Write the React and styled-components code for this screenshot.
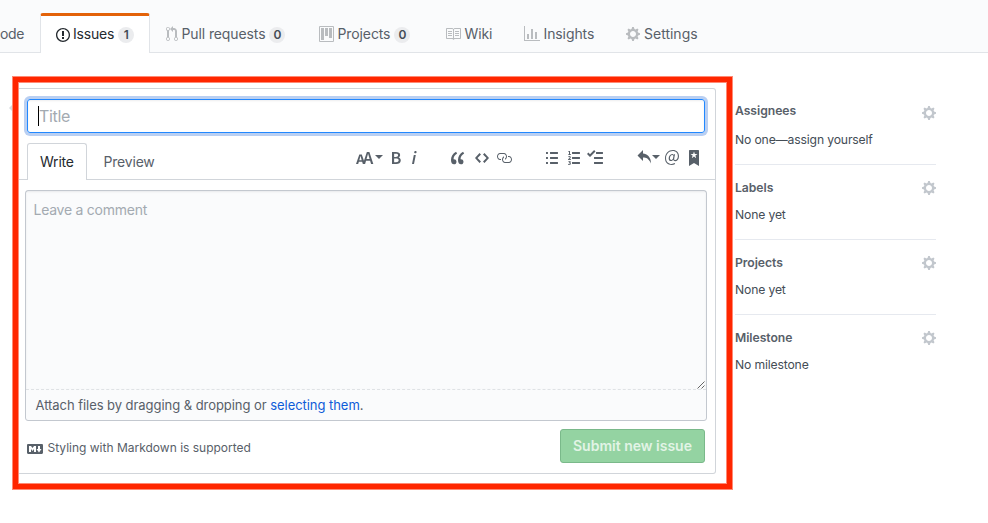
import React from "react";
import styled, { createGlobalStyle } from "styled-components";

const GlobalStyle = createGlobalStyle`
  * { box-sizing: border-box; }
  body {
    margin: 0;
    background: #fff;
    color: #444d56;
    font-family: Inter, "Liberation Sans", sans-serif;
    font-size: 13px;
    overflow: hidden;
  }
`;

const ICONS = {
  issue: [14, "M7 2.3c3.14 0 5.7 2.56 5.7 5.7s-2.56 5.7-5.7 5.7A5.71 5.71 0 0 1 1.3 8c0-3.14 2.56-5.7 5.7-5.7zM7 1C3.14 1 0 4.14 0 8s3.14 7 7 7 7-3.14 7-7-3.14-7-7-7zm1 3H6v5h2V4zm0 6H6v2h2v-2z"],
  pull: [12, "M11 11.28V5c-.03-.78-.34-1.47-.94-2.06C9.46 2.35 8.78 2.03 8 2H7V0L4 3l3 3V4h1c.27.02.48.11.69.31.21.2.3.42.31.69v6.28A1.993 1.993 0 0 0 10 15a1.993 1.993 0 0 0 1-3.72zm-1 2.92c-.66 0-1.2-.55-1.2-1.2 0-.65.55-1.2 1.2-1.2.65 0 1.2.55 1.2 1.2 0 .65-.55 1.2-1.2 1.2zM4 3c0-1.11-.89-2-2-2a1.993 1.993 0 0 0-1 3.72v6.56A1.993 1.993 0 0 0 2 15a1.993 1.993 0 0 0 1-3.72V4.72c.59-.34 1-.98 1-1.72zm-.8 10c0 .66-.55 1.2-1.2 1.2-.65 0-1.2-.55-1.2-1.2 0-.65.55-1.2 1.2-1.2.65 0 1.2.55 1.2 1.2zM2 4.2C1.34 4.2.8 3.65.8 3c0-.65.55-1.2 1.2-1.2.65 0 1.2.55 1.2 1.2 0 .65-.55 1.2-1.2 1.2z"],
  project: [15, "M10 12h3V2h-3v10zm-4-2h3V2H6v8zm-4 4h3V2H2v12zm-1 1h13V1H1v14zM14 0H1a1 1 0 0 0-1 1v14a1 1 0 0 0 1 1h13a1 1 0 0 0 1-1V1a1 1 0 0 0-1-1z"],
  book: [16, "M3 5h4v1H3V5zm0 3h4V7H3v1zm0 2h4V9H3v1zm11-5h-4v1h4V5zm0 2h-4v1h4V7zm0 2h-4v1h4V9zm2-6v9c0 .55-.45 1-1 1H9.5l-1 1-1-1H2c-.55 0-1-.45-1-1V3c0-.55.45-1 1-1h5.5l1 1 1-1H15c.55 0 1 .45 1 1zm-8 .5L7.5 3H2v9h6V3.5zm7-.5H9.5l-.5.5V12h6V3z"],
  graph: [16, "M16 14v1H0V0h1v14h15zM5 13H3V8h2v5zm4 0H7V3h2v10zm4 0h-2V6h2v7z"],
  gear: [14, "M14 8.77v-1.6l-1.94-.64-.45-1.09.88-1.84-1.13-1.13-1.81.91-1.09-.45-.69-1.92h-1.6l-.63 1.94-1.11.45-1.84-.88-1.13 1.13.91 1.81-.45 1.09L0 7.23v1.59l1.94.64.45 1.09-.88 1.84 1.13 1.13 1.81-.91 1.09.45.69 1.92h1.59l.63-1.94 1.11-.45 1.84.88 1.13-1.13-.92-1.81.47-1.09L14 8.75v.02zM7 11c-1.66 0-3-1.34-3-3s1.34-3 3-3 3 1.34 3 3-1.34 3-3 3z"],
  textSize: [18, "M13.62 9.08L12.1 3.66h-.06l-1.5 5.42h3.08zM5.7 10.13S4.68 6.52 4.53 6.02h-.08l-1.13 4.11H5.7zM17.31 14h-2.25l-.95-3.25h-4.07L9.09 14H6.84l-.69-2.33H2.87L2.17 14H0l3.3-9.59h2.5l2.17 6.34L10.86 2h2.52l3.94 12h-.01z"],
  bold: [10, "M1 2h3.83c2.48 0 4.3.75 4.3 2.95 0 1.14-.63 2.23-1.67 2.61v.06c1.33.3 2.3 1.23 2.3 2.86 0 2.39-1.97 3.52-4.61 3.52H1V2zm3.66 4.95c1.67 0 2.38-.66 2.38-1.69 0-1.17-.78-1.61-2.34-1.61H3.13v3.3h1.53zm.27 5.39c1.77 0 2.75-.64 2.75-1.98 0-1.27-.95-1.81-2.75-1.81h-1.8v3.8h1.8v-.01z"],
  italic: [6, "M2.81 5h1.98L3 14H1l1.81-9zm.36-2.7c0-.7.58-1.3 1.33-1.3.56 0 1.13.38 1.13 1.03 0 .75-.59 1.3-1.33 1.3-.58 0-1.13-.38-1.13-1.03z"],
  quote: [14, "M6.16 3.5C3.73 5.06 2.55 6.67 2.55 9.36c.16-.05.3-.05.44-.05 1.27 0 2.5.86 2.5 2.41 0 1.61-1.03 2.61-2.5 2.61-1.9 0-2.99-1.52-2.99-4.25 0-3.8 1.75-6.53 5.02-8.42L6.16 3.5zm7 0c-2.43 1.56-3.61 3.17-3.61 5.86.16-.05.3-.05.44-.05 1.27 0 2.5.86 2.5 2.41 0 1.61-1.03 2.61-2.5 2.61-1.89 0-2.98-1.52-2.98-4.25 0-3.8 1.75-6.53 5.02-8.42l1.14 1.84h-.01z"],
  code: [14, "M9.5 3L8 4.5 11.5 8 8 11.5 9.5 13 14 8 9.5 3zm-5 0L0 8l4.5 5L6 11.5 2.5 8 6 4.5 4.5 3z"],
  link: [16, "M4 9h1v1H4c-1.5 0-3-1.69-3-3.5S2.55 3 4 3h4c1.45 0 3 1.69 3 3.5 0 1.41-.91 2.72-2 3.25V8.59c.58-.45 1-1.27 1-2.09C10 5.22 8.98 4 8 4H4c-.98 0-2 1.22-2 2.5S3 9 4 9zm9-3h-1v1h1c1 0 2 1.22 2 2.5S13.98 12 13 12H9c-.98 0-2-1.22-2-2.5 0-.83.42-1.64 1-2.09V6.25c-1.09.53-2 1.84-2 3.25C6 11.31 7.55 13 9 13h4c1.45 0 3-1.69 3-3.5S14.5 6 13 6z"],
  bullets: [12, "M2 13c0 .59 0 1-.59 1H.59C0 14 0 13.59 0 13c0-.59 0-1 .59-1h.81c.59 0 .59.41.59 1H2zm2.59-9h6.81c.59 0 .59-.41.59-1 0-.59 0-1-.59-1H4.59C4 2 4 2.41 4 3c0 .59 0 1 .59 1zM1.41 7H.59C0 7 0 7.41 0 8c0 .59 0 1 .59 1h.81c.59 0 .59-.41.59-1 0-.59 0-1-.59-1h.01zm0-5H.59C0 2 0 2.41 0 3c0 .59 0 1 .59 1h.81c.59 0 .59-.41.59-1 0-.59 0-1-.59-1h.01zm10 5H4.59C4 7 4 7.41 4 8c0 .59 0 1 .59 1h6.81c.59 0 .59-.41.59-1 0-.59 0-1-.59-1h.01zm0 5H4.59C4 12 4 12.41 4 13c0 .59 0 1 .59 1h6.81c.59 0 .59-.41.59-1 0-.59 0-1-.59-1h.01z"],
  numbers: [12, "M12 13c0 .59 0 1-.59 1H4.59C4 14 4 13.59 4 13c0-.59 0-1 .59-1h6.81c.59 0 .59.41.59 1H12zM4.59 4h6.81c.59 0 .59-.41.59-1 0-.59 0-1-.59-1H4.59C4 2 4 2.41 4 3c0 .59 0 1 .59 1zm6.81 3H4.59C4 7 4 7.41 4 8c0 .59 0 1 .59 1h6.81c.59 0 .59-.41.59-1 0-.59 0-1-.59-1zM2 1h-.72c-.3.19-.58.25-1.03.34V2H1v2.14H.16V5H3v-.86H2V1zm.25 8.13c-.17 0-.45.03-.66.06.53-.56 1.14-1.25 1.14-1.89C2.72 6.52 2.17 6 1.38 6c-.59 0-.97.2-1.38.64l.58.58c.19-.19.38-.38.64-.38.28 0 .48.16.48.52 0 .53-.77 1.2-1.7 2.06V10h3l-.09-.88h-.66v.01zm-.08 3.78v-.03c.44-.19.64-.47.64-.86 0-.7-.56-1.11-1.44-1.11-.48 0-.89.19-1.28.52l.55.64c.25-.2.44-.31.69-.31.27 0 .42.13.42.36 0 .27-.2.44-.86.44v.75c.83 0 .98.17.98.47 0 .25-.23.38-.58.38-.28 0-.56-.14-.81-.38l-.48.66c.3.36.77.56 1.41.56.83 0 1.53-.41 1.53-1.16 0-.5-.31-.81-.77-.94v.01z"],
  tasks: [16, "M15.41 9H7.59C7 9 7 8.59 7 8c0-.59 0-1 .59-1h7.81c.59 0 .59.41.59 1 0 .59 0 1-.59 1h.01zM9.59 4C9 4 9 3.59 9 3c0-.59 0-1 .59-1h5.81c.59 0 .59.41.59 1 0 .59 0 1-.59 1H9.59zM0 3.91l1.41-1.3L3 4.2 7.09 0 8.5 1.41 3 6.91l-3-3zM7.59 12h7.81c.59 0 .59.41.59 1 0 .59 0 1-.59 1H7.59C7 14 7 13.59 7 13c0-.59 0-1 .59-1z"],
  reply: [14, "M6 3.5c3.92.44 8 3.125 8 10-2.312-5.062-4.75-6-8-6V11L.5 5.5 6 0v3.5z"],
  mention: [14, "M6.58 15c1.25 0 2.52-.31 3.56-.94l-.42-.94c-.84.52-1.89.83-3.03.83-3.23 0-5.64-2.08-5.64-5.72 0-4.37 3.23-7.18 6.58-7.18 3.45 0 5.22 2.19 5.22 5.2 0 2.39-1.34 3.86-2.5 3.86-1.05 0-1.36-.73-1.05-2.19l.73-3.75H8.98l-.11.72c-.41-.63-.94-.83-1.56-.83-2.19 0-3.66 2.39-3.66 4.38 0 1.67.94 2.61 2.3 2.61.84 0 1.67-.53 2.3-1.25.11.94.94 1.45 1.98 1.45 1.67 0 3.77-1.67 3.77-5C14 2.61 11.59 0 7.83 0 3.66 0 0 3.33 0 8.33 0 12.71 2.92 15 6.58 15zm-.31-5c-.73 0-1.36-.52-1.36-1.67 0-1.45.94-3.22 2.41-3.22.52 0 .84.2 1.15.73l-.53 2.82c-.64.84-1.15 1.34-1.67 1.34z"],
  saved: [10, "M9 0H1C.27 0 0 .27 0 1v15l5-3.09L10 16V1c0-.73-.27-1-1-1zm-.78 4.25L6.36 5.61l.72 2.16c.06.22-.02.28-.2.17L5 6.6 3.12 7.94c-.19.11-.25.05-.2-.17l.72-2.16-1.86-1.36c-.17-.16-.14-.23.09-.23l2.3-.03.7-2.16h.25l.7 2.16 2.3.03c.23 0 .27.08.09.23h.01z"],
  markdown: [16, "M14.85 3H1.15C.52 3 0 3.52 0 4.15v7.69C0 12.48.52 13 1.15 13h13.69c.64 0 1.15-.52 1.15-1.15v-7.7C16 3.52 15.48 3 14.85 3zM9 11H7V8L5.5 9.92 4 8v3H2V5h2l1.5 2L7 5h2v6zm2.99.5L9.5 8H11V5h2v3h1.5l-2.51 3.5z"],
};

const Svg = styled.svg`
  display: block;
  flex: none;
  fill: currentColor;
`;

function Icon({ name }) {
  const [w, d] = ICONS[name];
  return (
    <Svg width={w} height={16} viewBox={`0 0 ${w} 16`} aria-hidden="true">
      <path fillRule="evenodd" d={d} />
    </Svg>
  );
}

const Page = styled.div`
  width: 988px;
  height: 523px;
  overflow: hidden;
`;

const Nav = styled.nav`
  display: flex;
  height: 53px;
  padding-top: 13px;
  background: #fafbfc;
  border-bottom: 1px solid #e1e4e8;
`;

const NavTab = styled.a`
  display: flex;
  flex: none;
  align-items: center;
  width: ${(p) => p.$width}px;
  height: ${(p) => (p.$active ? 40 : 39)}px;
  padding-left: ${(p) => p.$inset}px;
  padding-top: 3px;
  color: ${(p) => (p.$active ? "#24292e" : "#586069")};
  font-size: 14px;
  white-space: nowrap;
  ${(p) =>
    p.$active &&
    `
    padding-top: 0;
    background: #fff;
    border: 1px solid #e1e4e8;
    border-top: 3px solid #e36209;
    border-bottom: 0;
    border-radius: 3px 3px 0 0;
  `}
`;

const NavIcon = styled.span`
  margin-right: ${(p) => p.$gap}px;
  color: ${(p) => (p.$active ? "#24292e" : "#b9bcbf")};
`;

const NavLabel = styled.span`
  margin-bottom: 2px;
  letter-spacing: ${(p) => p.$track || 0}px;
`;

const Counter = styled.span`
  height: 16px;
  min-width: 16px;
  margin: 1px 0 0 4px;
  padding: 0 4px;
  border-radius: 8px;
  background: #ebecee;
  color: #444d56;
  font-size: 12px;
  font-weight: 600;
  line-height: 16px;
  text-align: center;
`;

const Main = styled.main`
  display: flex;
  padding: 24px 0 0 8px;
`;

const Nub = styled.div`
  width: 5px;
  padding: 28px 0 0 1px;
  color: #d8dbdf;
`;

const Frame = styled.div`
  width: 719px;
  height: 412px;
  border: 5px solid #ff2600;
  padding: 6px 11px 9px 1px;
  box-shadow: 0 0 0 1px #ff8a75, inset 0 0 0 1px #ff8a75;
`;

const Card = styled.div`
  height: 386px;
  padding: 10px 8px 0;
  border: 1px solid #d1d5da;
  border-left: 0;
  border-radius: 0 3px 3px 0;
`;

const TitleField = styled.div`
  display: flex;
  align-items: center;
  width: 678px;
  height: 34px;
  padding-left: 10px;
  border: 1px solid #2188ff;
  border-radius: 3px;
  box-shadow: inset 0 1px 2px rgba(27, 31, 35, 0.075), 0 0 0 3px #b9cff2;
  color: #a3aab1;
  font-size: 16px;
  letter-spacing: -0.35px;
`;

const Caret = styled.span`
  width: 1px;
  height: 20px;
  background: #000;
`;

const EditorHead = styled.div`
  display: flex;
  height: 47px;
  margin: 0 -8px;
  padding: 10px 0 0 8px;
  border-bottom: 1px solid #d1d5da;
`;

const EditorTab = styled.button`
  width: ${(p) => p.$width}px;
  height: 37px;
  padding: 0 0 ${(p) => (p.$active ? 1 : 0)}px ${(p) => (p.$active ? 12 : 16.5)}px;
  background: ${(p) => (p.$active ? "#fff" : "none")};
  border: ${(p) => (p.$active ? "1px solid #d1d5da" : "0")};
  border-bottom: 0;
  border-radius: 3px 3px 0 0;
  color: ${(p) => (p.$active ? "#24292e" : "#586069")};
  font: 14px Inter, sans-serif;
  letter-spacing: -0.2px;
  text-align: left;
`;

const Toolbar = styled.div`
  display: flex;
  height: 16px;
  margin: 7px 0 0 auto;
  padding-right: 16px;
  color: #586069;
`;

const Tool = styled.span`
  display: flex;
  margin-left: ${(p) => p.$gap || 0}px;
`;

const DropCaret = styled.i`
  width: 8px;
  height: 4px;
  margin: 5px 0 0 1px;
  background: currentColor;
  clip-path: polygon(0 0, 100% 0, 50% 100%);
`;

const Comment = styled.div`
  width: 682px;
  height: 231px;
  margin: 10px 0 0 -2px;
  background: #fafbfc;
  border: 1px solid #c3c8cf;
  border-radius: 3px;
`;

const CommentArea = styled.div`
  display: flex;
  flex-direction: column;
  justify-content: space-between;
  height: 199px;
  padding: 9px 1px 0 7.5px;
  border-bottom: 1px dashed #dfe2e5;
  box-shadow: inset 0 1px 2px rgba(27, 31, 35, 0.075);
  color: #a3aab1;
  font-size: 14px;
  letter-spacing: -0.25px;
  line-height: 20px;
`;

const Grip = styled.svg`
  align-self: flex-end;
  display: block;
`;

const Attach = styled.p`
  margin: 0;
  padding-left: 9.5px;
  color: #586069;
  font-size: 13px;
  letter-spacing: -0.05px;
  line-height: 31px;
  white-space: nowrap;
`;

const Link = styled.a`
  color: #0f5bd8;
`;

const Footer = styled.div`
  display: flex;
  justify-content: space-between;
  width: 678px;
  margin-top: 8px;
`;

const MarkdownHint = styled.div`
  display: flex;
  align-items: flex-start;
  gap: 4.5px;
  padding-top: 12px;
  color: #586069;
  font-size: 12px;
  line-height: 14px;
`;

const Submit = styled.button`
  width: 145px;
  height: 34px;
  padding: 0 0 2px;
  background: #94d3a2;
  border: 1px solid #7ab98a;
  border-radius: 3px;
  color: #e2f4e6;
  font: 600 14px Inter, sans-serif;
`;

const Sidebar = styled.aside`
  width: 201px;
  margin-left: 3px;
  padding-top: 9px;
`;

const Section = styled.section`
  height: ${(p) => (p.$tall ? 79 : 75)}px;
  padding-top: ${(p) => (p.$tall ? 17 : 15)}px;
  border-bottom: ${(p) => (p.$last ? "0" : "1px solid #e6e9ef")};
  font-size: 12.2px;
  letter-spacing: -0.16px;
  line-height: 16px;
`;

const SectionHead = styled.div`
  display: flex;
  justify-content: space-between;
  margin-bottom: ${(p) => (p.$tall ? 13 : 11)}px;
  font-weight: 600;
  letter-spacing: -0.05px;
  color: #586069;
  height: 16px;
`;

const SectionIcon = styled.span`
  margin-top: ${(p) => (p.$tall ? 2 : 0)}px;
  color: #c2c7cd;
`;

const TABS = [
  { label: "Issues", icon: "issue", width: 110, inset: 15, gap: 3, count: 1, active: true, track: -0.2 },
  { label: "Pull requests", icon: "pull", width: 153, inset: 16, gap: 3.5, count: 0, track: -0.11 },
  { label: "Projects", icon: "project", width: 126, inset: 16, gap: 3.5, count: 0, track: -0.11 },
  { label: "Wiki", icon: "book", width: 79, inset: 16, gap: 3.5, track: -0.1 },
  { label: "Insights", icon: "graph", width: 102, inset: 16, gap: 3.5, track: -0.1 },
  { label: "Settings", icon: "gear", width: 110, inset: 16, gap: 4 },
];

const TOOLS = [
  { icon: "textSize", drop: true },
  { icon: "bold", gap: 8 },
  { icon: "italic", gap: 10 },
  { icon: "quote", gap: 34 },
  { icon: "code", gap: 10 },
  { icon: "link", gap: 7 },
  { icon: "bullets", gap: 34 },
  { icon: "numbers", gap: 10 },
  { icon: "tasks", gap: 7 },
  { icon: "reply", gap: 34, drop: true },
  { icon: "mention", gap: 5 },
  { icon: "saved", gap: 10 },
];

const SECTIONS = [
  ["Assignees", "No one—assign yourself"],
  ["Labels", "None yet"],
  ["Projects", "None yet"],
  ["Milestone", "No milestone"],
];

export default function App() {
  return (
    <Page>
      <GlobalStyle />
      <Nav>
        <NavTab $width={40} $inset={-1}>
          <NavLabel $track={-0.3}>ode</NavLabel>
        </NavTab>
        {TABS.map((t) => (
          <NavTab key={t.label} $width={t.width} $inset={t.inset} $active={t.active}>
            <NavIcon $gap={t.gap} $active={t.active}><Icon name={t.icon} /></NavIcon>
            <NavLabel $track={t.track}>{t.label}</NavLabel>
            {t.count !== undefined && <Counter>{t.count}</Counter>}
          </NavTab>
        ))}
      </Nav>
      <Main>
        <Nub>
          <Svg width="3" height="6" viewBox="0 0 3 6"><path d="M3 0 0 3l3 3z" /></Svg>
        </Nub>
        <Frame>
          <Card>
            <TitleField><Caret />Title</TitleField>
            <EditorHead>
              <EditorTab $width={60} $active>Write</EditorTab>
              <EditorTab $width={90}>Preview</EditorTab>
              <Toolbar>
                {TOOLS.map((t) => (
                  <Tool key={t.icon} $gap={t.gap}>
                    <Icon name={t.icon} />
                    {t.drop && <DropCaret />}
                  </Tool>
                ))}
              </Toolbar>
            </EditorHead>
            <Comment>
              <CommentArea>
                Leave a comment
                <Grip width="8" height="8" viewBox="0 0 8 8" stroke="#555" strokeWidth="0.9">
                  <path d="M0.5 7.5l7-7M4.5 7.5l3-3" />
                </Grip>
              </CommentArea>
              <Attach>
                Attach files by dragging &amp; dropping or <Link>selecting them</Link>.
              </Attach>
            </Comment>
            <Footer>
              <MarkdownHint><Icon name="markdown" />Styling with Markdown is supported</MarkdownHint>
              <Submit>Submit new issue</Submit>
            </Footer>
          </Card>
        </Frame>
        <Sidebar>
          {SECTIONS.map(([title, value], i) => (
            <Section key={title} $tall={i === 0} $last={i === 3}>
              <SectionHead $tall={i === 0}>
                {title}
                <SectionIcon $tall={i === 0}><Icon name="gear" /></SectionIcon>
              </SectionHead>
              {value}
            </Section>
          ))}
        </Sidebar>
      </Main>
    </Page>
  );
}
